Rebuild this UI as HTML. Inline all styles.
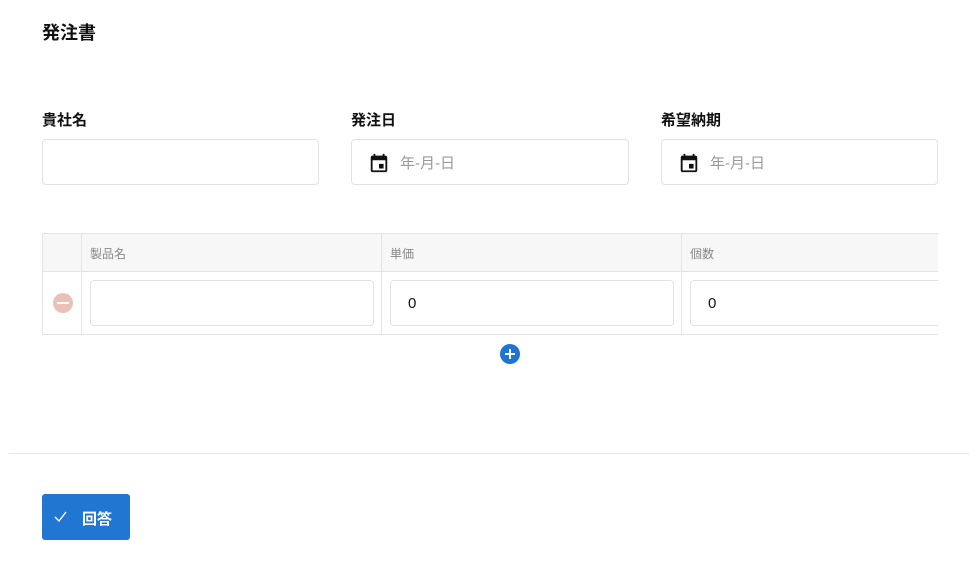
<!DOCTYPE html>
<html><head><meta charset="utf-8"><style>
*{box-sizing:border-box;margin:0;padding:0}
body{width:977px;height:562px;background:#fff;font-family:"Liberation Sans","Noto Sans CJK JP",sans-serif;position:relative;overflow:hidden;color:#111}
.a{position:absolute}
.lbl{font-size:15px;font-weight:bold}
.inp{position:absolute;border:1px solid #e2e2e2;border-radius:4px;background:#fff}
.ph{position:absolute;left:48px;top:12px;font-size:15px;color:#999}
.cal{position:absolute;left:16px;top:12px}
.hd{position:absolute;top:245px;font-size:12px;color:#888}
.v{position:absolute;left:17px;top:14px;font-size:15px;color:#111}
</style></head><body>
<div class="a" style="left:42px;top:19px;font-size:18px;font-weight:bold">発注書</div>
<div class="a lbl" style="left:42px;top:109px">貴社名</div>
<div class="a lbl" style="left:351px;top:109px">発注日</div>
<div class="a lbl" style="left:661px;top:109px">希望納期</div>
<div class="inp" style="left:42px;top:139px;width:277px;height:46px"></div>
<div class="inp" style="left:351px;top:139px;width:278px;height:46px">
<svg class="cal" width="22" height="22" viewBox="0 0 24 24"><path fill="#111" d="M19 4h-1V2h-2v2H8V2H6v2H5c-1.1 0-2 .9-2 2v14c0 1.1.9 2 2 2h14c1.1 0 2-.9 2-2V6c0-1.1-.9-2-2-2zm0 16H5V9h14v11zM12 13h5v5h-5z"/></svg>
<span class="ph">年-月-日</span></div>
<div class="inp" style="left:661px;top:139px;width:277px;height:46px">
<svg class="cal" width="22" height="22" viewBox="0 0 24 24"><path fill="#111" d="M19 4h-1V2h-2v2H8V2H6v2H5c-1.1 0-2 .9-2 2v14c0 1.1.9 2 2 2h14c1.1 0 2-.9 2-2V6c0-1.1-.9-2-2-2zm0 16H5V9h14v11zM12 13h5v5h-5z"/></svg>
<span class="ph">年-月-日</span></div>

<div class="a" style="left:42px;top:233px;width:896px;height:102px;border:1px solid #e4e4e4;border-right:none;overflow:hidden">
<div class="a" style="left:0;top:0;width:896px;height:38px;background:#f7f7f7;border-bottom:1px solid #e4e4e4"></div>
<div class="a" style="left:38px;top:0;width:1px;height:102px;background:#e4e4e4"></div>
<div class="a" style="left:338px;top:0;width:1px;height:102px;background:#e4e4e4"></div>
<div class="a" style="left:638px;top:0;width:1px;height:102px;background:#e4e4e4"></div>
<div class="inp" style="left:47px;top:46px;width:284px;height:46px"></div>
<div class="inp" style="left:347px;top:46px;width:284px;height:46px"><span class="v">0</span></div>
<div class="inp" style="left:647px;top:46px;width:284px;height:46px"><span class="v">0</span></div>
<div class="a" style="left:10px;top:59px;width:20px;height:20px;border-radius:50%;background:#ebc0b6"><div class="a" style="left:4px;top:9px;width:12px;height:2px;background:#fff"></div></div>
</div>
<div class="hd" style="left:90px">製品名</div>
<div class="hd" style="left:390px">単価</div>
<div class="hd" style="left:690px">個数</div>
<div class="a" style="left:500px;top:344px;width:20px;height:20px;border-radius:50%;background:#1f73d1"><div class="a" style="left:5px;top:9px;width:10px;height:2px;background:#fff"></div><div class="a" style="left:9px;top:5px;width:2px;height:10px;background:#fff"></div></div>

<div class="a" style="left:9px;top:453px;width:960px;height:1px;background:#e6e6e6"></div>
<div class="a" style="left:42px;top:494px;width:88px;height:46px;background:#2176d2;border-radius:3px">
<svg class="a" style="left:12px;top:17px" width="13" height="11" viewBox="0 0 13 11"><path d="M1 6l4 4L12 1" stroke="#fff" stroke-width="1.4" fill="none"/></svg>
<span class="a" style="left:40px;top:14px;color:#fff;font-size:15px;font-weight:bold">回答</span></div>
</body></html>
